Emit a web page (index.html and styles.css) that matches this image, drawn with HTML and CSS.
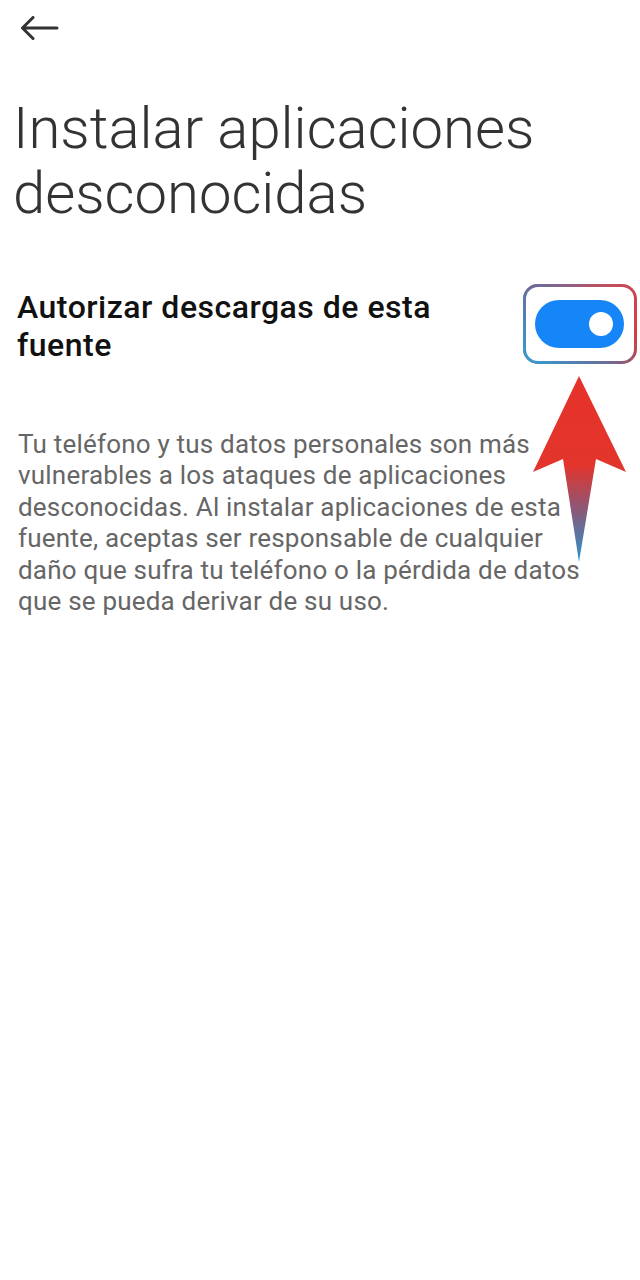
FILE: index.html
```html
<!DOCTYPE html>
<html lang="es">
<head>
<meta charset="utf-8">
<link rel="stylesheet" href="styles.css">
</head>
<body>
<div class="page">
  <header class="topbar">
    <svg class="back" width="40" height="28" viewBox="0 0 40 28">
      <path d="M3 12 H37 M13 1.5 L2.5 12 L13 22.5" fill="none" stroke="#333" stroke-width="3" stroke-linecap="round" stroke-linejoin="round"/>
    </svg>
  </header>
  <h1 class="title">Instalar aplicaciones desconocidas</h1>
  <div class="row">
    <div class="label">Autorizar descargas de esta fuente</div>
    <div class="toggle-frame">
      <div class="toggle"><span class="pill"></span><span class="knob"></span></div>
    </div>
  </div>
  <p class="desc">Tu teléfono y tus datos personales son más<br>vulnerables a los ataques de aplicaciones<br>desconocidas. Al instalar aplicaciones de esta<br>fuente, aceptas ser responsable de cualquier<br>daño que sufra tu teléfono o la pérdida de datos<br>que se pueda derivar de su uso.</p>
  <svg class="pointer" width="100" height="200" viewBox="0 0 100 200">
    <defs>
      <linearGradient id="ag" x1="0" y1="0" x2="0" y2="1">
        <stop offset="0" stop-color="#e6322a"/>
        <stop offset="0.48" stop-color="#e3352c"/>
        <stop offset="0.72" stop-color="#8a5878"/>
        <stop offset="1" stop-color="#2a95cf"/>
      </linearGradient>
    </defs>
    <path d="M46 0 L93 96 L63 83 L46 186 L30 83 L0 96 Z" fill="url(#ag)"/>
  </svg>
</div>
</body>
</html>
```
FILE: styles.css
```css
html, body {
  margin: 0;
  padding: 0;
  background: #ffffff;
}
.page {
  position: relative;
  width: 640px;
  min-height: 1280px;
  font-family: Roboto, "Noto Sans", sans-serif;
}
.topbar {
  height: 96px;
  padding: 16px 0 0 20px;
  box-sizing: border-box;
}
.back {
  display: block;
}
.title {
  margin: 0;
  padding: 0 20px 0 13px;
  font-weight: 300;
  font-size: 58px;
  line-height: 65px;
  color: #333333;
}
.row {
  display: flex;
  align-items: flex-start;
  justify-content: space-between;
  margin-top: 58px;
  padding-left: 17px;
  padding-right: 3px;
}
.label {
  width: 470px;
  font-weight: 500;
  font-size: 32px;
  line-height: 38px;
  letter-spacing: 0.5px;
  color: #111111;
  padding-top: 4px;
}
.toggle-frame {
  position: relative;
  width: 114px;
  height: 80px;
  border-radius: 15px;
  padding: 3px;
  box-sizing: border-box;
  background: linear-gradient(135deg, #7d6890 0%, #c64a5a 50%, #e03535 100%);
}
.toggle-frame::before {
  content: "";
  position: absolute;
  inset: 0;
  border-radius: 15px;
  background: linear-gradient(45deg, #2ea0d8 0%, #6c6b96 45%, rgba(108, 107, 150, 0) 75%);
}
.toggle {
  position: relative;
  z-index: 1;
  height: 74px;
  border-radius: 12px;
  background: #ffffff;
  display: flex;
  align-items: center;
  padding-left: 9px;
}
.pill {
  display: block;
  width: 89px;
  height: 48px;
  border-radius: 24px;
  background: #1585f7;
}
.knob {
  position: absolute;
  left: 63px;
  top: 25px;
  width: 24px;
  height: 24px;
  border-radius: 50%;
  background: #ffffff;
}
.desc {
  margin: 0;
  padding: 65px 20px 0 18px;
  font-size: 26px;
  line-height: 31.4px;
  letter-spacing: 0.2px;
  color: #666666;
}
.pointer {
  position: absolute;
  left: 533px;
  top: 376px;
}
```
